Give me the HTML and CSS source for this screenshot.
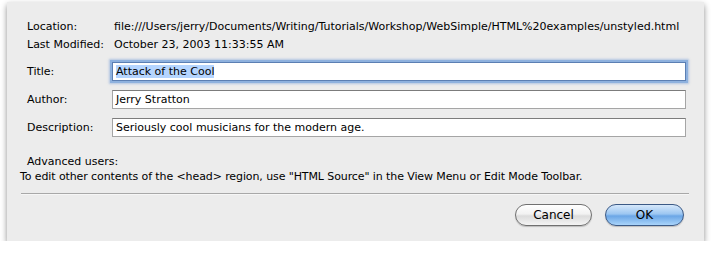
FILE: index.html
```html
<!DOCTYPE html>
<html lang="en">
<head>
  <meta charset="UTF-8">
  <title>Page Properties</title>
  <link rel="stylesheet" href="styles.css">
</head>
<body class="pp-body">

<div class="pp-dialog">
  <div class="pp-info">
    <div class="pp-label">Location:</div>
    <div class="pp-value">file:///Users/jerry/Documents/Writing/Tutorials/Workshop/WebSimple/HTML%20examples/unstyled.html</div>
    <div class="pp-label">Last Modified:</div>
    <div class="pp-value">October 23, 2003 11:33:55 AM</div>
  </div>

  <div class="pp-fields">
    <label class="pp-label" for="pp-title">Title:</label>
    <div class="pp-input pp-focus" id="pp-title"><span class="pp-selected">Attack of the Cool</span></div>

    <label class="pp-label" for="pp-author">Author:</label>
    <div class="pp-input" id="pp-author">Jerry Stratton</div>

    <label class="pp-label" for="pp-desc">Description:</label>
    <div class="pp-input" id="pp-desc">Seriously cool musicians for the modern age.</div>
  </div>

  <div class="pp-note">
    <p class="pp-note-title">Advanced users:</p>
    <p class="pp-note-text">To edit other contents of the &lt;head&gt; region, use "HTML Source" in the View Menu or Edit Mode Toolbar.</p>
  </div>

  <div class="pp-separator"></div>

  <div class="pp-buttons">
    <button class="pp-button" type="button">Cancel</button>
    <button class="pp-button pp-default" type="button">OK</button>
  </div>
</div>

</body>
</html>
```

FILE: styles.css
```css
/* base */
.pp-body {
  margin: 0;
  padding: 0;
  background: #fff;
  font-family: "DejaVu Sans", sans-serif;
  font-size: 11px;
  color: #000;
}

.pp-dialog {
  box-sizing: border-box;
  width: 697px;
  height: 239px;
  margin: 2px 0 0 7px;
  padding: 16px 18px 0 20px;
  background: #ececec;
  box-shadow: 0 3px 6px rgba(0, 0, 0, .45);
}

/* file info */
.pp-info {
  display: grid;
  grid-template-columns: 87px 1fr;
  line-height: 18px;
}

.pp-value {
  white-space: nowrap;
}

/* fields */
.pp-fields {
  display: grid;
  grid-template-columns: 85px 1fr;
  grid-row-gap: 9px;
  margin-top: 8px;
  align-items: center;
}

.pp-input {
  box-sizing: border-box;
  height: 19px;
  padding: 0 3px;
  line-height: 17px;
  background: #fff;
  border: 1px solid #a5a5a5;
  border-top-color: #7c7c7c;
  white-space: nowrap;
}

.pp-focus {
  border-color: #5b7fb3;
  box-shadow: 0 0 0 2px #8eb1de, 0 0 2px 3px rgba(120, 160, 215, .5);
}

.pp-selected {
  background: #b5d5ff;
}

/* note */
.pp-note {
  margin-top: 17px;
  line-height: 15px;
}

.pp-note-title {
  margin: 0;
}

.pp-note-text {
  margin: 0 0 0 -7px;
  letter-spacing: -0.1px;
  white-space: nowrap;
}

.pp-separator {
  height: 1px;
  margin: 9px -3px 0 -6px;
  background: #a8a8a8;
  border-bottom: 1px solid #f6f6f6;
}

/* buttons */
.pp-buttons {
  display: flex;
  justify-content: flex-end;
  gap: 13px;
  margin-top: 9px;
  padding-right: 2px;
}

.pp-button {
  box-sizing: border-box;
  width: 77px;
  height: 22px;
  padding: 0;
  font-family: "DejaVu Sans", sans-serif;
  font-size: 12px;
  color: #000;
  border: 1px solid #707070;
  border-radius: 11px;
  background: linear-gradient(#ffffff 0%, #f2f2f2 45%, #dcdcdc 55%, #f4f4f4 100%);
  box-shadow: 0 1px 1px rgba(0, 0, 0, .2);
}

.pp-default {
  width: 79px;
  border-color: #3c5a86;
  background: linear-gradient(#d6e8fb 0%, #9cc6f1 45%, #6ba6e6 55%, #a9d4fa 100%);
}
```
